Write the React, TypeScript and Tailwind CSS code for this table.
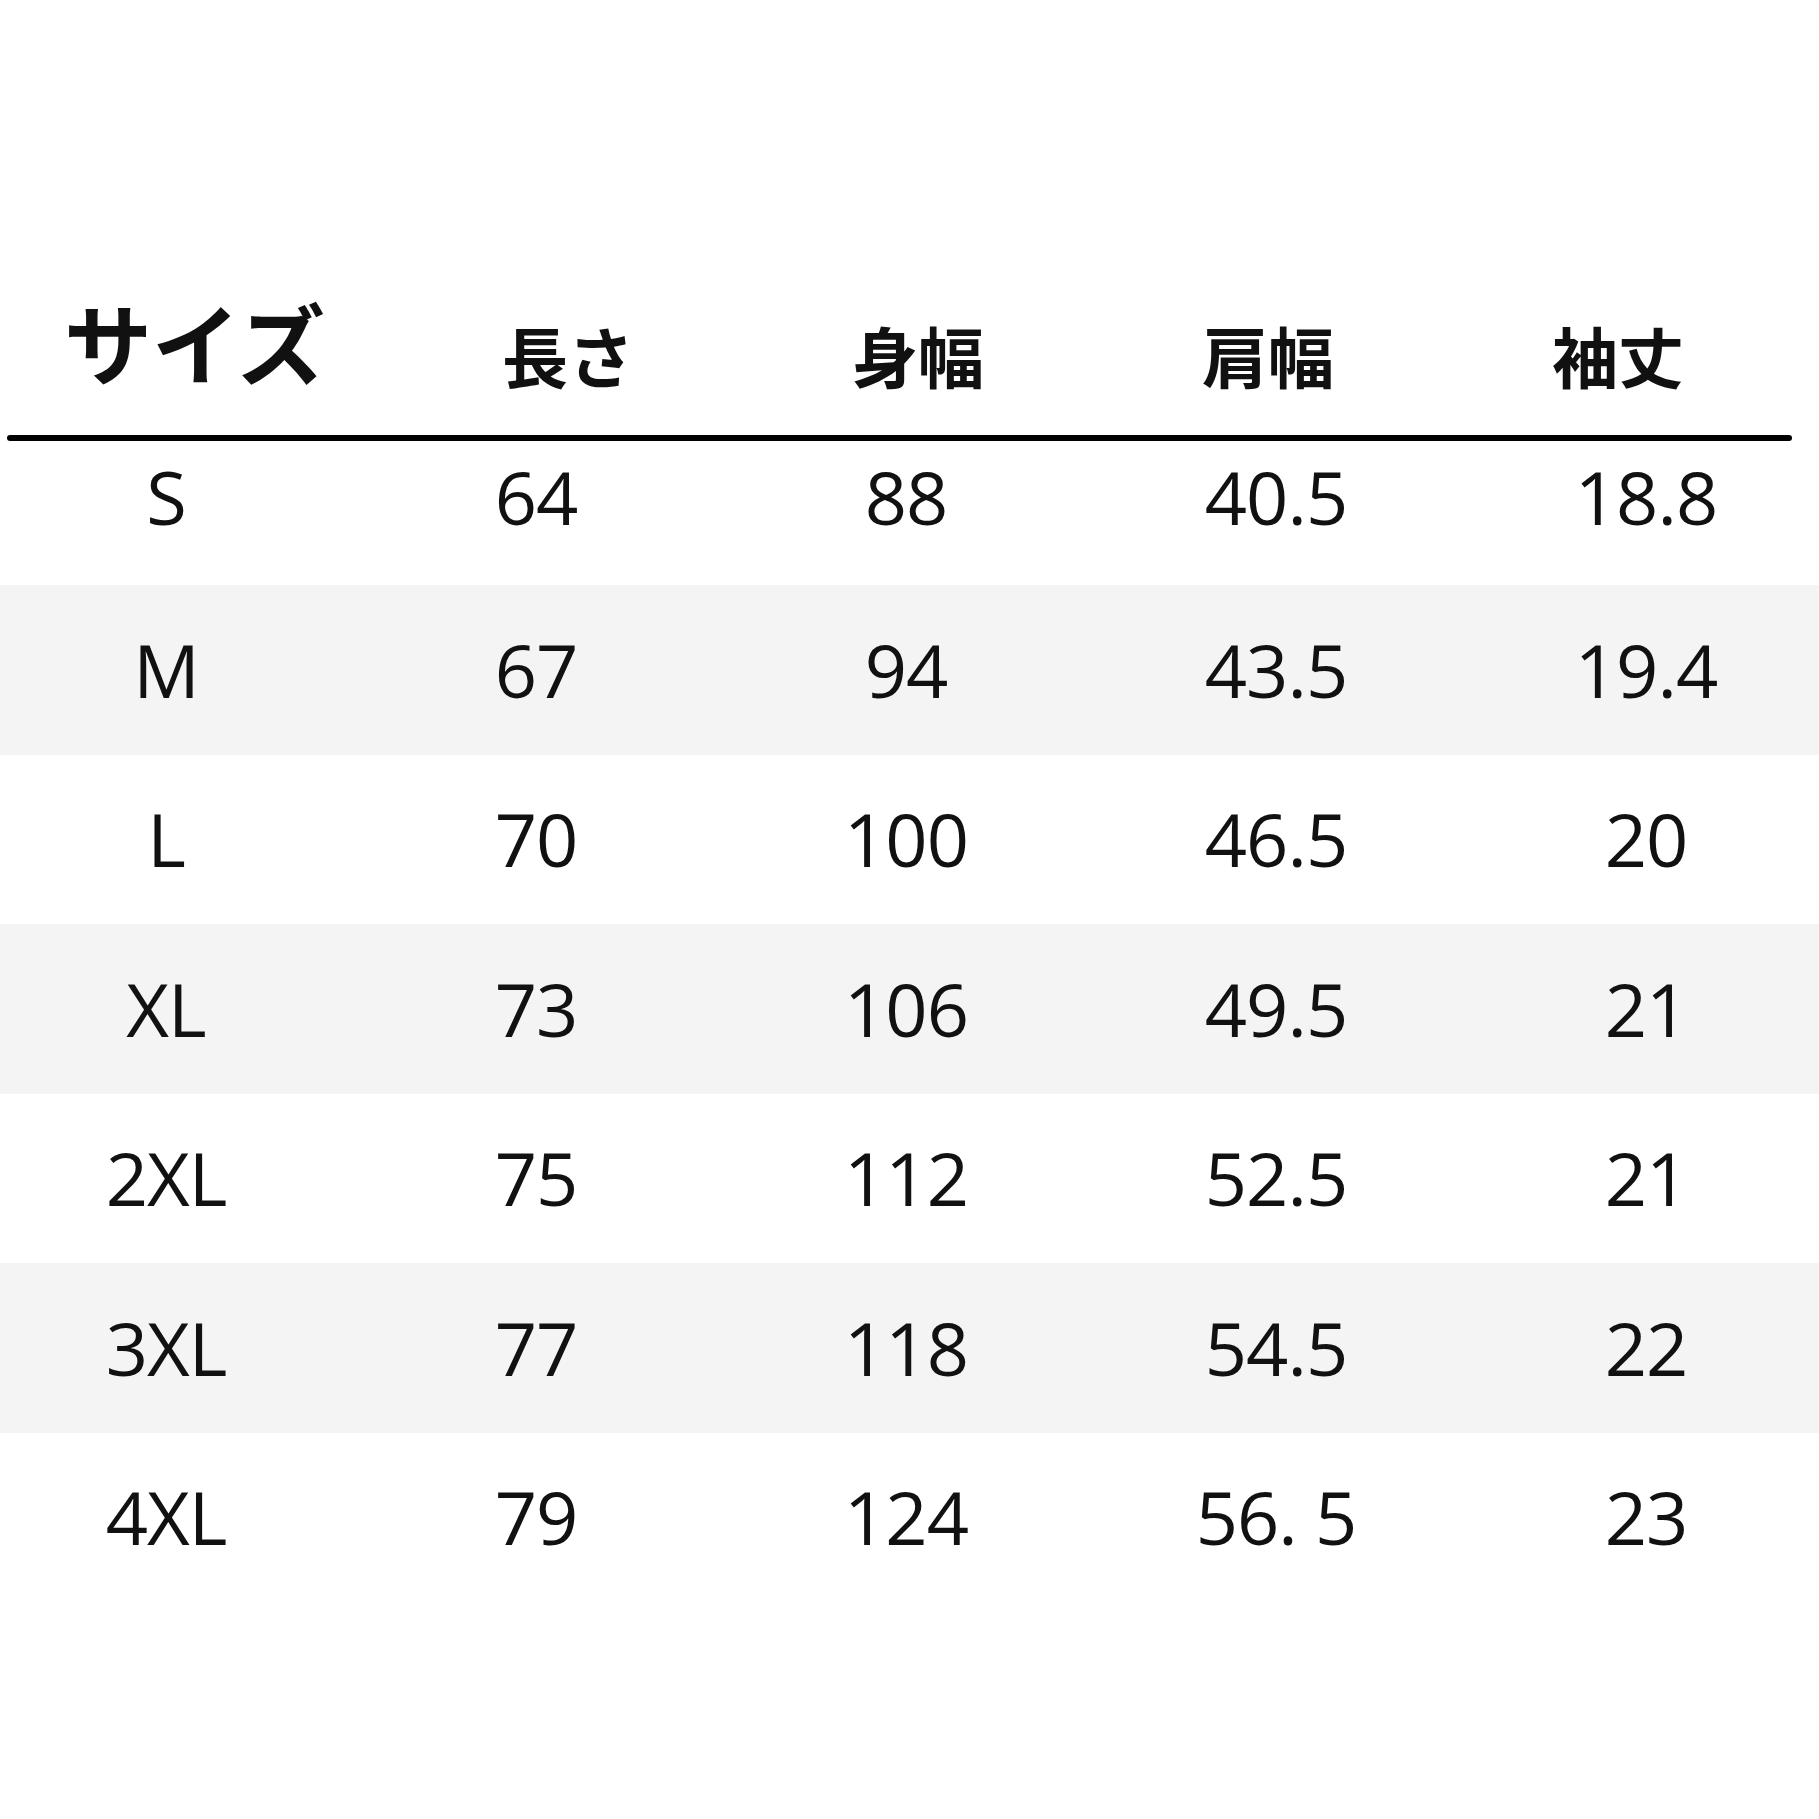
const HEADERS = ["長さ", "身幅", "肩幅", "袖丈"];

type Row = {
  size: string;
  length: string;
  body: string;
  shoulder: string;
  sleeve: string;
};

const ROWS: Row[] = [
  { size: "S", length: "64", body: "88", shoulder: "40.5", sleeve: "18.8" },
  { size: "M", length: "67", body: "94", shoulder: "43.5", sleeve: "19.4" },
  { size: "L", length: "70", body: "100", shoulder: "46.5", sleeve: "20" },
  { size: "XL", length: "73", body: "106", shoulder: "49.5", sleeve: "21" },
  { size: "2XL", length: "75", body: "112", shoulder: "52.5", sleeve: "21" },
  { size: "3XL", length: "77", body: "118", shoulder: "54.5", sleeve: "22" },
  { size: "4XL", length: "79", body: "124", shoulder: "56. 5", sleeve: "23" },
];

const jpFont = "font-['Noto_Sans_CJK_JP','Noto_Sans',sans-serif]";

export default function App() {
  return (
    <main className="h-[1819px] w-[1819px] overflow-hidden bg-white text-[#111]">
      {/* header */}
      <div className={`flex h-[387px] items-end pl-[64px] font-bold ${jpFont}`}>
        <div className="mb-[3px] w-[438px] shrink-0 text-[88px] leading-none">サイズ</div>
        {HEADERS.map((h) => (
          <div key={h} className="w-[350px] shrink-0 text-[66px] leading-none">
            {h}
          </div>
        ))}
      </div>
      <div className="ml-[7px] mr-[27px] mt-[48px] h-[6px] rounded-full bg-black" />

      {/* rows */}
      <div className="font-['Open_Sans','Noto_Sans',sans-serif] text-[74px] leading-none tracking-[-1px]">
        {ROWS.map((row, i) => (
          <div
            key={row.size}
            className={`grid grid-cols-[repeat(5,200px)] items-center gap-x-[170px] pl-[66px] ${
              i === 0 ? "h-[144px] pb-[33px]" : "h-[169.5px]"
            } ${i % 2 === 1 ? "bg-[#f4f4f4]" : ""}`}
          >
            <div className="text-center">{row.size}</div>
            <div className="text-center">{row.length}</div>
            <div className="text-center">{row.body}</div>
            <div className="text-center">{row.shoulder}</div>
            <div className="text-center">{row.sleeve}</div>
          </div>
        ))}
      </div>
    </main>
  );
}
